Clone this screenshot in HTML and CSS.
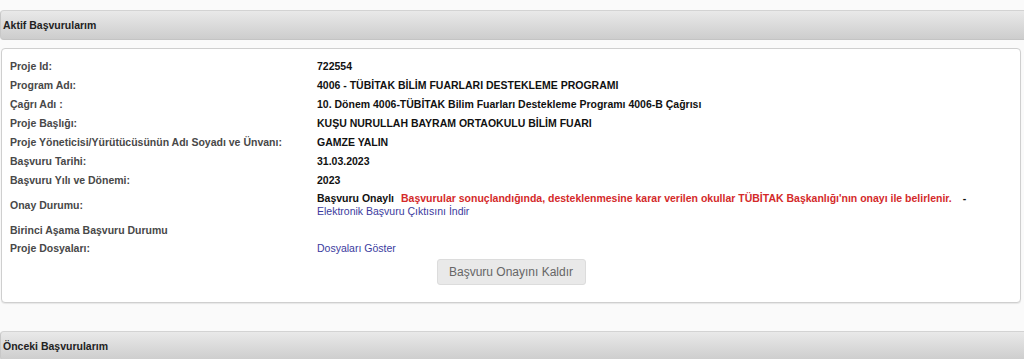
FILE: index.html
```html
<!DOCTYPE html>
<html lang="tr">
<head>
<meta charset="utf-8">
<title>Aktif Başvurularım</title>
<link rel="stylesheet" href="styles.css">
</head>
<body>
<div class="page">
  <div class="section-heading">Aktif Başvurularım</div>
  <div class="card">
    <table class="info">
      <tr><td class="label">Proje Id:</td><td class="value">722554</td></tr>
      <tr><td class="label">Program Adı:</td><td class="value">4006 - TÜBİTAK BİLİM FUARLARI DESTEKLEME PROGRAMI</td></tr>
      <tr><td class="label">Çağrı Adı :</td><td class="value">10. Dönem 4006-TÜBİTAK Bilim Fuarları Destekleme Programı 4006-B Çağrısı</td></tr>
      <tr><td class="label">Proje Başlığı:</td><td class="value">KUŞU NURULLAH BAYRAM ORTAOKULU BİLİM FUARI</td></tr>
      <tr><td class="label">Proje Yöneticisi/Yürütücüsünün Adı Soyadı ve Ünvanı:</td><td class="value">GAMZE YALIN</td></tr>
      <tr><td class="label">Başvuru Tarihi:</td><td class="value">31.03.2023</td></tr>
      <tr><td class="label">Başvuru Yılı ve Dönemi:</td><td class="value">2023</td></tr>
      <tr class="tall"><td class="label">Onay Durumu:</td><td class="value">Başvuru Onaylı <span class="warn">Başvurular sonuçlandığında, desteklenmesine karar verilen okullar TÜBİTAK Başkanlığı'nın onayı ile belirlenir.</span> <span class="dash">-</span><br><a class="link" href="#">Elektronik Başvuru Çıktısını İndir</a></td></tr>
      <tr><td class="label">Birinci Aşama Başvuru Durumu</td><td class="value"></td></tr>
      <tr class="short"><td class="label">Proje Dosyaları:</td><td class="value"><a class="link" href="#">Dosyaları Göster</a></td></tr>
    </table>
    <div class="actions"><button class="btn" type="button">Başvuru Onayını Kaldır</button></div>
  </div>
  <div class="section-heading second">Önceki Başvurularım</div>
</div>
</body>
</html>
```

FILE: styles.css
```css
html, body {
  margin: 0;
  padding: 0;
  background: #fafafa;
  overflow: hidden;
}
body {
  font-family: "Liberation Sans", Arial, sans-serif;
  font-size: 11px;
  color: #222;
}
.page {
  padding-top: 10px;
}
.section-heading {
  margin-right: -20px;
  height: 28px;
  line-height: 28px;
  padding-left: 2px;
  border-top: 1px solid #d3d3d3;
  border-bottom: 1px solid #c4c4c4;
  border-left: 1px solid #c8c8c8;
  border-top-left-radius: 4px;
  border-bottom-left-radius: 4px;
  background: linear-gradient(#e9e9e9, #cdcdcd);
  font-weight: bold;
  font-size: 10.5px;
  color: #222;
}
.section-heading.second {
  margin-top: 28px;
}
.card {
  margin: 8px 3px 0 1px;
  border: 1px solid #cfcfcf;
  border-radius: 4px;
  background: #fff;
  padding: 8px 8px 17px;
  box-shadow: 0 1px 1px rgba(0,0,0,0.08);
}
.info {
  border-collapse: collapse;
  font-size: 10.5px;
}
.info td {
  padding: 3px 0;
  line-height: 13px;
  vertical-align: middle;
}
.info tr.tall td {
  padding: 2px 0 3px;
}
.info tr.short td {
  padding: 2px 0 3px;
}
.info td.label {
  width: 307px;
  color: #484848;
  font-weight: bold;
}
.info td.value {
  color: #111;
  font-weight: bold;
}
.warn {
  color: #d42a2a;
  margin-left: 4px;
}
.dash {
  margin-left: 8px;
}
.link {
  color: #3b3b9e;
  font-weight: normal;
  text-decoration: none;
}
.actions {
  display: flex;
  justify-content: center;
  margin-top: 1px;
}
.btn {
  width: 149px;
  height: 26px;
  font-family: "Liberation Sans", Arial, sans-serif;
  font-size: 12px;
  color: #666;
  background: #e9e9e9;
  border: 1px solid #dcdcdc;
  border-radius: 3px;
}
```
